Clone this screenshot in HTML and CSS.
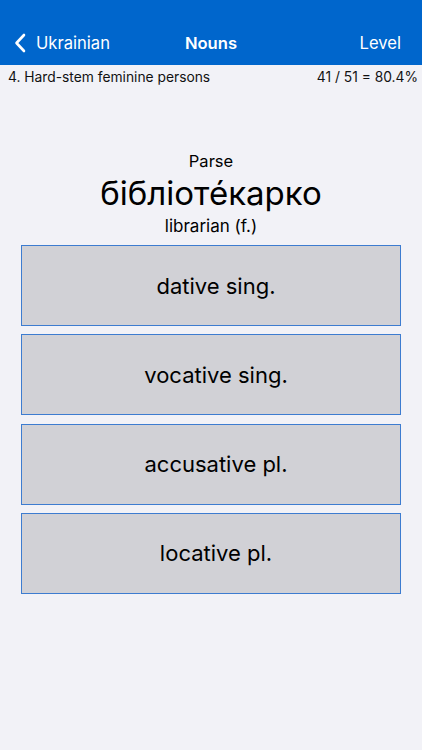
FILE: index.html
```html
<!DOCTYPE html>
<html lang="en">
<head>
<meta charset="utf-8">
<title>Nouns</title>
<link rel="stylesheet" href="styles.css">
</head>
<body>
<div class="screen">
  <header class="navbar">
    <div class="nav-left">
      <svg class="chevron" width="12" height="20" viewBox="0 0 12 20"><path d="M10 2 L2.5 10 L10 18" fill="none" stroke="#fff" stroke-width="2.6" stroke-linecap="round" stroke-linejoin="round"/></svg>
      <span>Ukrainian</span>
    </div>
    <div class="nav-title">Nouns</div>
    <div class="nav-right">Level</div>
  </header>
  <div class="status">
    <span>4. Hard-stem feminine persons</span>
    <span>41 / 51 = 80.4%</span>
  </div>
  <main class="quiz">
    <div class="prompt">
      <div class="label">Parse</div>
      <div class="word">бібліоте́карко</div>
      <div class="gloss">librarian (f.)</div>
    </div>
    <div class="answers">
      <div class="answer">dative sing.</div>
      <div class="answer">vocative sing.</div>
      <div class="answer">accusative pl.</div>
      <div class="answer">locative pl.</div>
    </div>
  </main>
</div>
</body>
</html>
```
FILE: styles.css
```css
* { box-sizing: border-box; }
html, body { margin: 0; padding: 0; }
body {
  background: #f2f2f7;
  font-family: Inter, "Noto Sans", "DejaVu Sans", sans-serif;
  color: #000;
}
.screen {
  width: 422px;
  height: 750px;
  display: flex;
  flex-direction: column;
}
.navbar {
  height: 65px;
  background: #0066cc;
  color: #fff;
  display: grid;
  grid-template-columns: 1fr auto 1fr;
  align-items: center;
  padding: 21px 21px 0 21px;
  font-size: 16.6px;
}
.nav-left {
  display: flex;
  align-items: center;
  gap: 10px;
  margin-left: -7px;
}
.chevron { display: block; }
.nav-title {
  font-weight: 600;
}
.nav-right {
  justify-self: end;
}
.status {
  height: 23px;
  display: flex;
  justify-content: space-between;
  align-items: center;
  padding: 0 4px 0 8px;
  font-size: 13.8px;
  color: #111;
}
.quiz {
  padding: 62px 21px 0;
}
.prompt {
  text-align: center;
}
.label {
  font-size: 16.5px;
  line-height: 22px;
}
.word {
  font-size: 33px;
  line-height: 42px;
}
.gloss {
  font-size: 17px;
  line-height: 24px;
}
.answers {
  margin-top: 7px;
  display: flex;
  flex-direction: column;
  gap: 8.33px;
}
.answer {
  height: 81px;
  background: #d1d1d6;
  border: 1.3px solid #3d7cd0;
  display: flex;
  align-items: center;
  justify-content: center;
  padding-left: 10px;
  font-size: 22px;
}
```
